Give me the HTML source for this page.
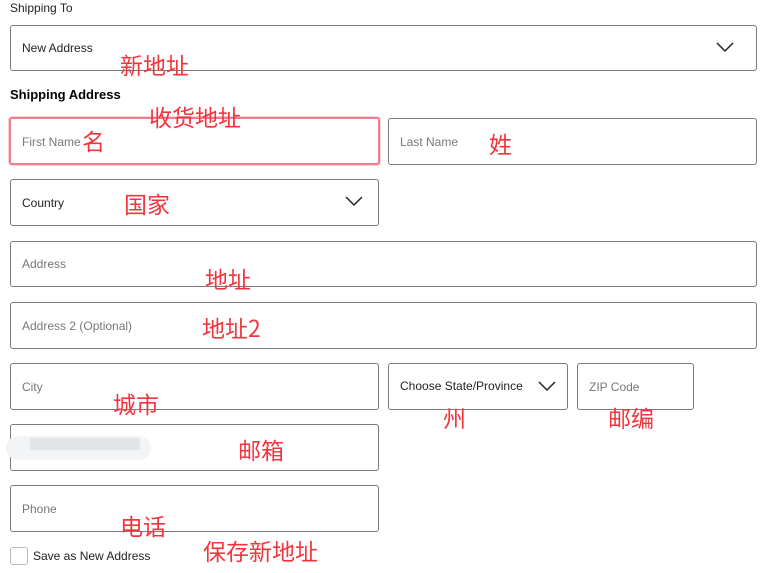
<!DOCTYPE html>
<html><head><meta charset="utf-8"><style>
body{margin:0;width:761px;height:573px;background:#fff;position:relative;overflow:hidden;font-family:"Liberation Sans","Noto Sans CJK SC",sans-serif}
.b{position:absolute;box-sizing:border-box;border:1px solid #7a7a7a;border-radius:3px;background:#fff}
.t{position:absolute;font-size:12px;color:#777;white-space:nowrap}
.d{color:#222}
.r{position:absolute;font-size:23px;color:#f2353d;font-family:"Noto Sans CJK SC","WenQuanYi Zen Hei",sans-serif;line-height:1;white-space:nowrap}
svg.c{position:absolute}
</style></head><body>
<div class="t d" style="left:10px;top:1px;font-size:12px">Shipping To</div>
<div class="b" style="left:10px;top:25px;width:747px;height:46px"></div>
<div class="t d" style="left:22px;top:41px">New Address</div>
<svg class="c" style="left:715px;top:41px" width="20" height="12"><path d="M2 2l8 8 8-8" fill="none" stroke="#222" stroke-width="1.5"/></svg>
<div class="t d" style="left:10px;top:87px;font-weight:bold;font-size:13px;color:#000">Shipping Address</div>
<div class="b" style="left:9px;top:117px;width:371px;height:48px;border:2px solid #f27d8f;box-shadow:0 0 0 1px #fbd0d7"></div>
<div class="t" style="left:22px;top:135px">First Name</div>
<div class="b" style="left:388px;top:118px;width:369px;height:47px"></div>
<div class="t" style="left:400px;top:135px">Last Name</div>
<div class="b" style="left:10px;top:179px;width:369px;height:47px"></div>
<div class="t d" style="left:22px;top:196px">Country</div>
<svg class="c" style="left:344px;top:195px" width="20" height="12"><path d="M2 2l8 8 8-8" fill="none" stroke="#222" stroke-width="1.5"/></svg>
<div class="b" style="left:10px;top:241px;width:747px;height:46px"></div>
<div class="t" style="left:22px;top:257px">Address</div>
<div class="b" style="left:10px;top:302px;width:747px;height:47px"></div>
<div class="t" style="left:22px;top:319px">Address 2 (Optional)</div>
<div class="b" style="left:10px;top:363px;width:369px;height:47px"></div>
<div class="t" style="left:22px;top:380px">City</div>
<div class="b" style="left:388px;top:363px;width:180px;height:47px"></div>
<div class="t d" style="left:400px;top:379px">Choose State/Province</div>
<svg class="c" style="left:537px;top:380px" width="20" height="12"><path d="M2 2l8 8 8-8" fill="none" stroke="#222" stroke-width="1.5"/></svg>
<div class="b" style="left:577px;top:363px;width:117px;height:47px"></div>
<div class="t" style="left:589px;top:380px">ZIP Code</div>
<div class="b" style="left:10px;top:424px;width:369px;height:47px"></div>
<div style="position:absolute;left:6px;top:436px;width:145px;height:24px;background:#f3f4f5;border-radius:12px"></div>
<div style="position:absolute;left:30px;top:438px;width:110px;height:12px;background:#e2e4e7"></div>
<div class="b" style="left:10px;top:485px;width:369px;height:47px"></div>
<div class="t" style="left:22px;top:502px">Phone</div>
<div class="b" style="left:10px;top:547px;width:18px;height:18px;border-color:#bbb"></div>
<div class="t d" style="left:33px;top:549px">Save as New Address</div>
<div class="r" style="left:120px;top:53px">新地址</div>
<div class="r" style="left:149px;top:105px">收货地址</div>
<div class="r" style="left:82px;top:129px">名</div>
<div class="r" style="left:489px;top:132px">姓</div>
<div class="r" style="left:124px;top:192px">国家</div>
<div class="r" style="left:205px;top:267px">地址</div>
<div class="r" style="left:202px;top:316px">地址2</div>
<div class="r" style="left:113px;top:392px">城市</div>
<div class="r" style="left:443px;top:406px">州</div>
<div class="r" style="left:608px;top:406px">邮编</div>
<div class="r" style="left:238px;top:438px">邮箱</div>
<div class="r" style="left:120px;top:514px">电话</div>
<div class="r" style="left:203px;top:539px">保存新地址</div>
</body></html>
